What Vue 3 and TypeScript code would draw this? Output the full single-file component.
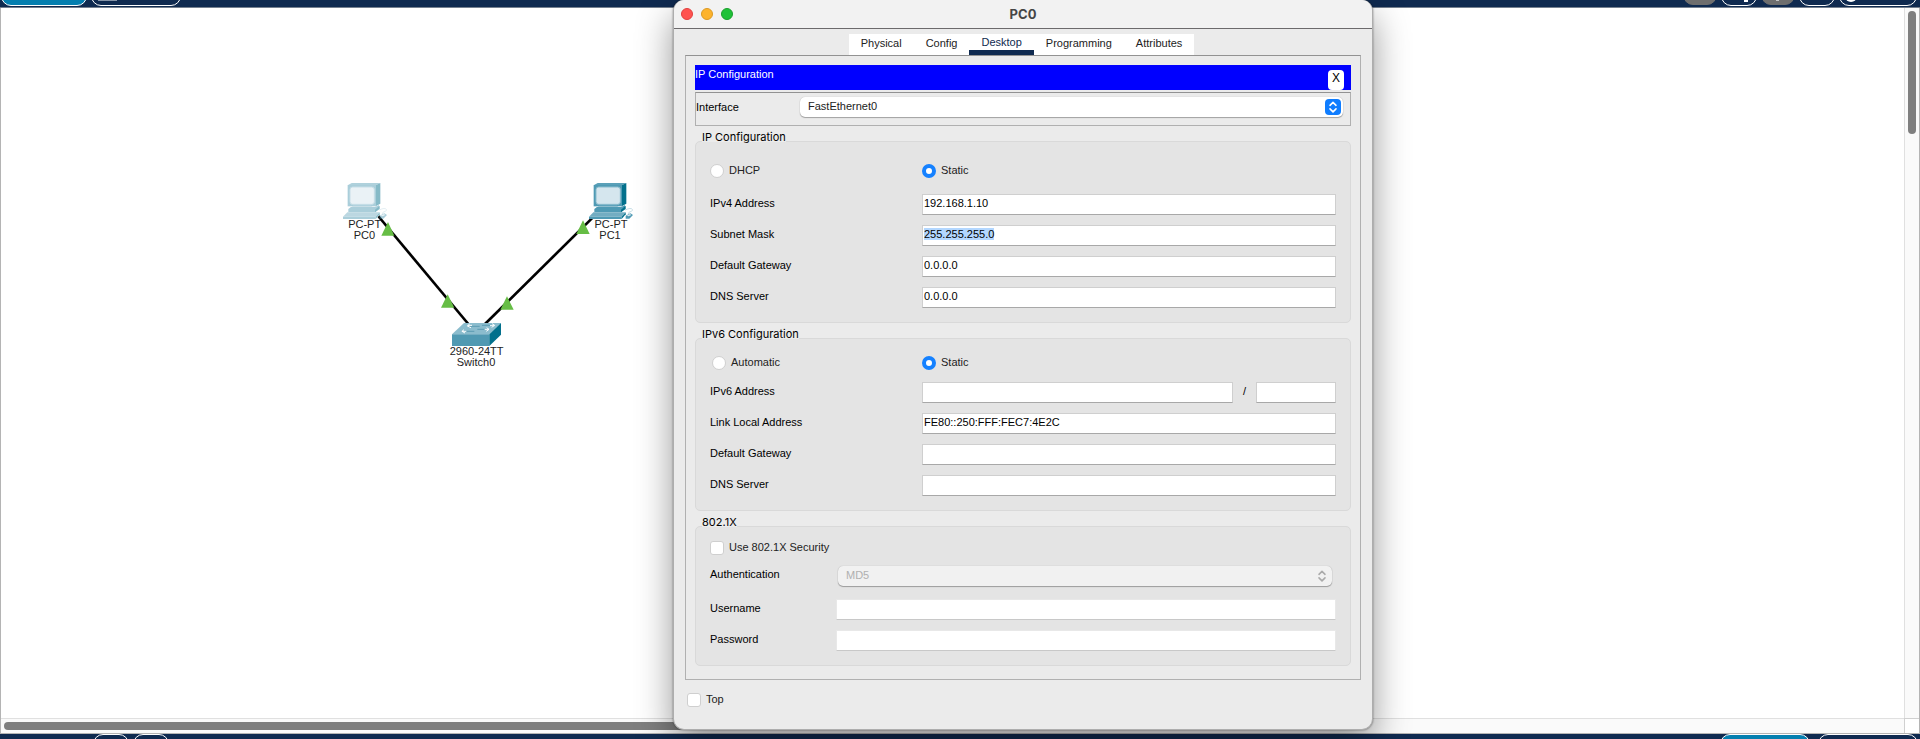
<script setup lang="ts">
import { onMounted, ref } from 'vue'

interface Field {
  id: string
  label: string
  value: string
}

const tabs = ['Physical', 'Config', 'Desktop', 'Programming', 'Attributes']
const activeTab = ref('Desktop')
const networkInterface = ref('FastEthernet0')
const ipv4Mode = ref('static')
const ipv6Mode = ref('static')
const useSecurity = ref(false)
const stayOnTop = ref(false)
const ipv6Address = ref('')
const ipv6Prefix = ref('')

const ipv4Fields = ref<Field[]>([
  { id: 'ipv4-address', label: 'IPv4 Address', value: '192.168.1.10' },
  { id: 'ipv4-mask', label: 'Subnet Mask', value: '255.255.255.0' },
  { id: 'ipv4-gateway', label: 'Default Gateway', value: '0.0.0.0' },
  { id: 'ipv4-dns', label: 'DNS Server', value: '0.0.0.0' },
])

const ipv6Fields = ref<Field[]>([
  { id: 'ipv6-link', label: 'Link Local Address', value: 'FE80::250:FFF:FEC7:4E2C' },
  { id: 'ipv6-gateway', label: 'Default Gateway', value: '' },
  { id: 'ipv6-dns', label: 'DNS Server', value: '' },
])

onMounted(() => {
  const mask = document.getElementById('ipv4-mask') as HTMLInputElement | null
  mask?.focus()
  mask?.select()
})
</script>

<template>
  <div class="app">
    <header class="bar bar-top">
      <div class="bar-group">
        <button class="pill pill-blue w86" type="button" aria-label="Logical"></button>
        <button class="pill w90" type="button" aria-label="Physical"><i class="stub"></i></button>
      </div>
      <div class="bar-group">
        <button class="pill pill-grey w34" type="button" aria-label="Back"></button>
        <button class="pill w36" type="button" aria-label="New cluster"><i class="dot"></i></button>
        <button class="pill pill-grey w34" type="button" aria-label="Move object"><i class="tip"></i></button>
        <button class="pill w36" type="button" aria-label="Set background"></button>
        <button class="pill w78" type="button" aria-label="Environment"><i class="knob"></i></button>
      </div>
    </header>

    <main class="workspace">
      <div class="canvas">
        <svg class="topology" viewBox="0 0 1020 660" role="img" aria-label="Network topology">
          <defs>
            <g id="pc">
              <path d="M14 7 L26 0 H112 L98 7Z" fill="#5aa0b8" />
              <path d="M98 7 L112 0 V62 L98 70Z" fill="#02708c" />
              <rect x="14" y="6" width="85" height="64" fill="#4f9ab4" />
              <rect x="21" y="12" width="73" height="52" rx="8" fill="#d5e6ee" stroke="#8bbccd" stroke-width="3" />
              <path d="M30 68 H84 L92 75 H22Z" fill="#8bbccd" />
              <path d="M16 78 L24 72 H96 L108 66 V76 L96 88 H16Z" fill="#4f9ab4" />
              <path d="M96 80 L110 68 V78 L96 88Z" fill="#02708c" />
              <path d="M13 88 H110 L98 101 H0Z" fill="#72adc2" />
              <path d="M0 101 H98 V108 H0Z" fill="#4f9ab4" />
              <path d="M98 101 L110 88 V94 L98 108Z" fill="#02708c" />
              <path d="M109 81 C122 74 132 76 130 82 C128 88 118 84 118 93" fill="none" stroke="#a9ccd8" stroke-width="2" />
              <path d="M110 98 L124 91 L132 96 L121 107 H110Z" fill="#4f9ab4" />
              <path d="M113 98 L123 93 L127 96 L119 100Z" fill="#d5e6ee" />
            </g>
          </defs>
          <g stroke="#000" stroke-width="8">
            <path d="M172 150 L445 477" />
            <path d="M818 158 L495 477" />
          </g>
          <g fill="#66bd45">
            <path d="M204 171 L223 212 H184Z" />
            <path d="M383 388 L403 428 H363Z" />
            <path d="M789 166 L809 207 H769Z" />
            <path d="M561 394 L581 434 H541Z" />
          </g>
          <g transform="translate(69 54)">
            <path d="M14 6 L26 0 H112 V66 L108 98 L98 108 H0 V100 L16 86Z" fill="#fff" />
            <use href="#pc" opacity="0.48" />
          </g>
          <use href="#pc" x="807" y="54" />
          <path d="M396 508 L432 474 H543 L508 508Z" fill="#8bbccd" />
          <path d="M396 508 H508 V543 H396Z" fill="#5099b2" />
          <path d="M508 508 L543 474 V509 L508 543Z" fill="#02708c" />
          <g fill="none" stroke="#fff" stroke-width="3">
            <path d="M443 484 H479 M486 481 H520 M425 499 H463 M472 493 H505" stroke="#5d9cb2" />
            <path d="M443 481 H456 M449 477 L442 483 L453 488 M510 482 H523 M516 476 L524 481 L515 487 M425 499 H439 M432 494 L426 499 L435 504 M494 493 H507 M500 488 L507 493 L499 499" />
          </g>
          <g class="caption">
            <text x="134" y="188">PC-PT</text>
            <text x="133" y="222">PC0</text>
            <text x="873" y="188">PC-PT</text>
            <text x="870" y="222">PC1</text>
            <text x="470" y="570">2960-24TT</text>
            <text x="468" y="602">Switch0</text>
          </g>
        </svg>
      </div>
      <div class="track-v"><div class="thumb-v"></div></div>
      <div class="track-h"><div class="thumb-h"></div></div>
      <div class="corner"></div>
    </main>

    <footer class="bar bar-bottom">
      <div class="bar-group">
        <button class="pill w36" type="button" aria-label="Time back"></button>
        <button class="pill w36" type="button" aria-label="Fast forward"></button>
      </div>
      <div class="bar-group">
        <button class="pill pill-blue w90" type="button" aria-label="Realtime"></button>
        <button class="pill w100" type="button" aria-label="Simulation"></button>
      </div>
    </footer>

    <section class="window" aria-labelledby="window-title">
      <div class="titlebar">
        <div class="lights">
          <button class="light red" type="button" aria-label="Close"></button>
          <button class="light amber" type="button" aria-label="Minimize"></button>
          <button class="light green" type="button" aria-label="Zoom"></button>
        </div>
        <h1 id="window-title">PC0</h1>
      </div>

      <nav class="tabs" aria-label="Device tabs">
        <button
          v-for="tab in tabs"
          :key="tab"
          type="button"
          class="tab"
          :class="{ active: tab === activeTab }"
          @click="activeTab = tab"
        >{{ tab }}</button>
      </nav>

      <form class="panel" @submit.prevent>
        <div class="banner">
          <h2>IP Configuration</h2>
          <button class="close" type="button">X</button>
        </div>

        <div class="interface">
          <label for="interface">Interface</label>
          <div class="picker">
            <select id="interface" v-model="networkInterface">
              <option>FastEthernet0</option>
            </select>
            <svg class="stepper" viewBox="0 0 16 16" aria-hidden="true">
              <rect width="16" height="16" rx="4" fill="#0f7dff" />
              <path d="M5 6.3 L8 3.4 L11 6.3 M5 9.9 L8 12.8 L11 9.9" fill="none" stroke="#fff" stroke-width="1.6" stroke-linecap="round" stroke-linejoin="round" />
            </svg>
          </div>
        </div>

        <h3>IP Configuration</h3>
        <div class="group group-v4">
          <div class="row radios">
            <label class="choice"><input v-model="ipv4Mode" type="radio" name="ipv4" value="dhcp" />DHCP</label>
            <label class="choice"><input v-model="ipv4Mode" type="radio" name="ipv4" value="static" />Static</label>
          </div>
          <div v-for="field in ipv4Fields" :key="field.id" class="row">
            <label :for="field.id">{{ field.label }}</label>
            <input :id="field.id" v-model="field.value" class="text" type="text" autocomplete="off" />
          </div>
        </div>

        <h3>IPv6 Configuration</h3>
        <div class="group group-v6">
          <div class="row radios">
            <label class="choice inset"><input v-model="ipv6Mode" type="radio" name="ipv6" value="auto" />Automatic</label>
            <label class="choice"><input v-model="ipv6Mode" type="radio" name="ipv6" value="static" />Static</label>
          </div>
          <div class="row">
            <label for="ipv6-address">IPv6 Address</label>
            <div class="split">
              <input id="ipv6-address" v-model="ipv6Address" class="text" type="text" />
              <label for="ipv6-prefix">/</label>
              <input id="ipv6-prefix" v-model="ipv6Prefix" class="text prefix" type="text" />
            </div>
          </div>
          <div v-for="field in ipv6Fields" :key="field.id" class="row">
            <label :for="field.id">{{ field.label }}</label>
            <input :id="field.id" v-model="field.value" class="text" type="text" />
          </div>
        </div>

        <h3>802.1X</h3>
        <div class="group group-auth">
          <label class="choice"><input v-model="useSecurity" type="checkbox" />Use 802.1X Security</label>
          <div class="row auth">
            <label for="authentication">Authentication</label>
            <div class="picker muted">
              <select id="authentication" disabled>
                <option>MD5</option>
              </select>
              <svg class="stepper" viewBox="0 0 16 16" aria-hidden="true">
                <path d="M5 6.3 L8 3.4 L11 6.3 M5 9.9 L8 12.8 L11 9.9" fill="none" stroke="#aaa" stroke-width="1.6" stroke-linecap="round" stroke-linejoin="round" />
              </svg>
            </div>
          </div>
          <div class="row">
            <label for="username">Username</label>
            <input id="username" class="text faded" type="text" disabled />
          </div>
          <div class="row">
            <label for="password">Password</label>
            <input id="password" class="text faded" type="password" disabled />
          </div>
        </div>
      </form>

      <label class="choice top"><input v-model="stayOnTop" type="checkbox" />Top</label>
    </section>
  </div>
</template>

<style>
body {
  margin: 0;
  overflow: hidden;
}
</style>

<style scoped>
.app,
.app * {
  box-sizing: border-box;
}
.app {
  position: relative;
  display: flex;
  flex-direction: column;
  min-height: 100vh;
  overflow: hidden;
  background: #fff;
  color: #000;
  font: 11px/14px "Liberation Sans", Arial, sans-serif;
}
button,
input,
select {
  margin: 0;
  padding: 0;
  font: inherit;
  color: inherit;
  outline: none;
}

/* Application bars */
.bar {
  display: flex;
  justify-content: space-between;
  background: #0f2a50;
  overflow: hidden;
}
.bar-top {
  height: 8px;
  align-items: flex-end;
  padding: 0 3px 1px 1px;
  border-bottom: 1px solid #75808f;
}
.bar-bottom {
  height: 5px;
  align-items: flex-start;
  padding: 0 2px 0 93px;
}
.bar-group {
  display: flex;
  gap: 4px;
}
.bar-bottom .bar-group:last-child {
  gap: 8px;
}
.pill {
  position: relative;
  height: 24px;
  border: 1px solid #fff;
  border-radius: 10px;
  background: #0f2a50;
}
.pill-blue {
  background: #047fb0;
}
.pill-grey {
  height: 23px;
  border-color: #6e6e6e;
  background: #6e6e6e;
}
.w34 { width: 34px; }
.w36 { width: 36px; }
.w78 { width: 78px; }
.w86 { width: 86px; }
.w90 { width: 90px; }
.w100 { width: 100px; }
.pill i {
  position: absolute;
  background: #fff;
}
.stub {
  left: 6px;
  bottom: 4px;
  width: 19px;
  height: 2px;
  opacity: 0.5;
}
.dot {
  right: 8px;
  bottom: 3px;
  width: 4px;
  height: 4px;
}
.tip {
  left: 14px;
  bottom: 3px;
  width: 3px;
  height: 3px;
  opacity: 0.6;
}
.knob {
  left: 5px;
  bottom: 3px;
  width: 12px;
  height: 12px;
  border-radius: 50%;
}

/* Workspace with scroll bars */
.workspace {
  flex: 1;
  display: grid;
  grid-template-columns: 1fr 15px;
  grid-template-rows: 1fr 15px;
  border: 1px solid #b4b4b4;
  border-top: 0;
}
.canvas {
  position: relative;
}
.topology {
  position: absolute;
  left: 319px;
  top: 157px;
  width: 340px;
  height: 220px;
}
.caption {
  font-size: 33px;
  fill: #222;
  text-anchor: middle;
}
.track-v {
  padding: 3px;
  border-left: 1px solid #e0e0e0;
  background: #fafafa;
}
.thumb-v {
  width: 8px;
  height: 123px;
  border-radius: 4px;
  background: #7f7f7f;
}
.track-h {
  padding: 3px;
  border-top: 1px solid #e0e0e0;
  background: #fafafa;
}
.thumb-h {
  width: 44%;
  height: 8px;
  border-radius: 4px;
  background: #7f7f7f;
}
.corner {
  border: solid #d0d0d0;
  border-width: 1px 0 0 1px;
}

/* Device window */
.window {
  position: absolute;
  left: 673px;
  top: 0;
  width: 700px;
  border: solid #adadad;
  border-width: 0 1px 1px;
  border-radius: 11px;
  background: #ebebeb;
  box-shadow: 0 16px 36px rgba(0, 0, 0, 0.42), 0 0 2px rgba(0, 0, 0, 0.5);
}
.titlebar {
  display: grid;
  grid-template-columns: 1fr auto 1fr;
  align-items: center;
  height: 29px;
  border-bottom: 1px solid #6c6a6c;
  border-radius: 11px 11px 0 0;
  background: #f2f2f2;
}
.titlebar h1 {
  margin: 0;
  font: 700 13px/16px Inter, sans-serif;
  color: #454545;
}
.lights {
  display: flex;
  gap: 8px;
  padding-left: 7px;
}
.light {
  width: 12px;
  height: 12px;
  border: 1px solid;
  border-radius: 50%;
}
.red { background: #ff5350; border-color: #e2403e; }
.amber { background: #fdb32c; border-color: #dc9a23; }
.green { background: #1fc138; border-color: #1aa02c; }

.tabs {
  display: flex;
  justify-content: center;
  padding: 5px 3px 0 0;
}
.tab {
  height: 21px;
  padding: 0 12px 4px;
  border: 0;
  background: #fff;
  color: #222;
}
.tab.active {
  padding: 2px 12px 1px;
  border-bottom: 5px solid #0f2a50;
  line-height: 13px;
  color: #0f2a50;
}
.panel {
  margin: 0 11px;
  padding: 9px;
  padding-bottom: 13px;
  border: 1px solid #b0b0b0;
  border-top-color: #929292;
}
.banner {
  display: flex;
  justify-content: space-between;
  align-items: flex-end;
  height: 25px;
  padding-right: 7px;
  background: #00f;
}
.banner h2 {
  align-self: flex-start;
  margin: 0;
  padding-top: 2px;
  font: inherit;
  color: #fff;
}
.close {
  width: 16px;
  height: 20px;
  padding-bottom: 5px;
  border: 0;
  border-radius: 4px;
  background: #fff;
  font-size: 12px;
}
.interface {
  display: grid;
  grid-template-columns: 104px 1fr;
  align-items: center;
  height: 34px;
  margin-top: 2px;
  padding: 0 7px 4px 0;
  border: 1px solid #b0b0b0;
  border-top-color: #929292;
}
.picker {
  position: relative;
  display: flex;
}
.picker select {
  appearance: none;
  width: 100%;
  height: 20px;
  padding: 0 24px 2px 8px;
  border: 0;
  border-radius: 5px;
  background: #fff;
  box-shadow: 0 1px 1px rgba(0, 0, 0, 0.3), 0 0 1px rgba(0, 0, 0, 0.25);
  color: #222;
}
.stepper {
  position: absolute;
  right: 2px;
  top: 2px;
  width: 16px;
  height: 16px;
  pointer-events: none;
}
.picker.muted select {
  background: #f1f1f1;
  color: #b0b0b0;
  opacity: 1;
}

h3 {
  position: relative;
  z-index: 1;
  width: fit-content;
  height: 15px;
  margin: 0 0 0 7px;
  font: 400 11px/22px Inter, sans-serif;
}
h3::after {
  content: "";
  position: absolute;
  z-index: -1;
  inset: 12px 0 -1px;
  background: #ebebeb;
}
.group {
  display: flex;
  flex-direction: column;
  gap: 10px;
  padding: 0 14px 14px;
  border: 1px solid #d9d9d9;
  border-radius: 5px;
  background: #e4e4e4;
}
.row {
  display: grid;
  grid-template-columns: 212px 1fr;
  align-items: center;
  height: 21px;
}
.row > label {
  padding-bottom: 4px;
}
.group-v4 {
  padding-top: 17px;
}
.group-v4 .radios {
  height: 23px;
  margin-bottom: 2px;
}
.group-v6 {
  padding-top: 14px;
}
.group-v6 .radios {
  height: 19px;
}
.group-auth .row {
  grid-template-columns: 126px 1fr;
}
.group-auth {
  padding-top: 14px;
}
.group-auth .auth {
  height: 22px;
  margin-bottom: 2px;
}
.auth .picker {
  padding: 0 4px 0 2px;
}
.auth .stepper {
  right: 6px;
}
.choice {
  display: flex;
  align-items: flex-start;
  gap: 5px;
  width: fit-content;
  line-height: 12px;
  color: #222;
}
.row > .choice {
  padding-bottom: 0;
}
.inset {
  padding-left: 2px;
}
.choice input {
  appearance: none;
  width: 14px;
  height: 14px;
  border: 1px solid #cfcfcf;
  background: #fff;
}
.choice input[type="radio"] {
  border-radius: 50%;
}
.choice input[type="radio"]:checked {
  border: 4px solid #1581ff;
}
.choice input[type="checkbox"] {
  border-radius: 3px;
}
.text {
  width: 100%;
  min-width: 0;
  height: 21px;
  padding: 0 1px 4px;
  border: 1px solid #cfcfcf;
  border-bottom-color: #a8a8a8;
  border-radius: 0;
  background: #fff;
}
.text::selection {
  background: #b3d7ff;
  color: #000;
}
.text.faded {
  border-color: #e8e8e8;
  border-bottom-color: #c8c8c8;
}
.split {
  display: flex;
  align-items: center;
}
.split label {
  padding: 0 10px 4px;
}
.split .prefix {
  flex: 0 0 80px;
}
.top {
  margin: 13px 0 22px 13px;
}
</style>
